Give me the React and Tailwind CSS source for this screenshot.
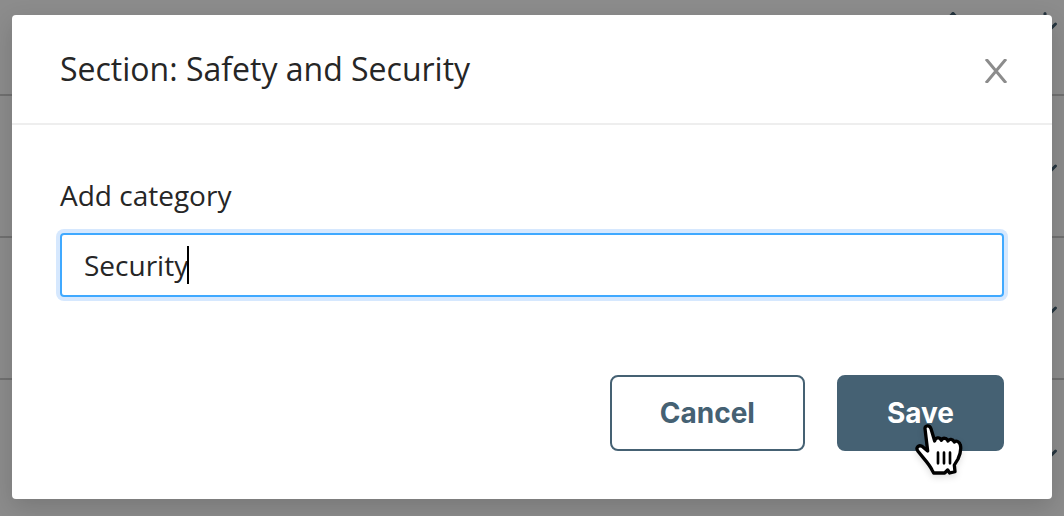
import React from 'react';
import { ArrowDown, ArrowUp } from 'lucide-react';

const rows = [1, 2, 3, 4];

const HandCursor = () => (
  <svg className="absolute left-[76px] top-[47px] w-[50px] h-[56px] pointer-events-none drop-shadow-md" viewBox="0 0 150 168">
    <path
      d="M36 20C35 10 50 8 54 20L65 57C67 46 80 44 85 55C89 46 102 47 105 57C109 49 119 51 124 60C130 54 140 60 142 69C146 84 140 100 135 111L124 129L126 149L110 153L104 144L95 153H62L57 144C49 126 33 111 15 88C7 77 16 68 27 73L44 87Z"
      fill="white"
      stroke="black"
      strokeWidth="10"
      strokeLinejoin="round"
    />
    <path d="M75 92V124M93 92V124M111 92V124" stroke="black" strokeWidth="8" strokeLinecap="round" />
  </svg>
);

const App = () => {
  return (
    <div className="relative min-h-screen overflow-hidden bg-white font-['Open_Sans','Noto_Sans',sans-serif] text-[#262626]">
      {/* Category list under the dialog */}
      <ul aria-hidden="true" className="-mt-[46px]">
        {rows.map((row) => (
          <li key={row} className="flex h-[142px] items-center justify-end gap-14 border-b-2 border-[#cccccc] pr-px text-[#456173] last:border-b-0">
            <ArrowUp size={36} />
            <ArrowDown size={36} />
          </li>
        ))}
      </ul>

      {/* Overlay */}
      <div className="absolute inset-0 bg-black/45 px-3 pt-[15px]">
        <div
          role="dialog"
          aria-labelledby="dialog-title"
          className="rounded bg-white shadow-[0_8px_24px_rgba(0,0,0,0.15)]"
        >
          <div className="flex items-center justify-between border-b-2 border-[#eeeeee] px-12 py-8">
            <h2 id="dialog-title" className="text-[32px] leading-11">Section: Safety and Security</h2>
            <button type="button" aria-label="Close" className="-mr-2 px-1 pt-2 pb-1">
              <svg className="w-6 h-6" viewBox="0 0 24 24" fill="none" stroke="#8c8c8c" strokeWidth="3">
                <path d="M2 0L22 24M22 0L2 24" />
              </svg>
            </button>
          </div>

          <form className="px-12 pt-12 pb-12" onSubmit={(e) => e.preventDefault()}>
            <label htmlFor="category" className="block text-[28px] leading-11">Add category</label>
            <div className="relative mt-4">
              <input
                id="category"
                type="text"
                defaultValue="Security"
                className="block h-16 w-full rounded border-2 border-[#40a9ff] px-[22px] text-[28px] caret-transparent outline-none ring-4 ring-[#d6e8fe]"
              />
              <span className="absolute left-[127px] top-[13px] h-[38px] w-0.5 bg-black" />
            </div>

            {/* Actions */}
            <div className="mt-[78px] flex justify-end gap-8 font-['Inter',sans-serif] text-[28px] leading-9 font-bold">
              <button type="button" className="rounded-lg border-2 border-[#456173] px-12 py-[18px] text-[#456173]">
                Cancel
              </button>
              <div className="relative">
                <button type="submit" className="rounded-lg border-2 border-[#456173] bg-[#456173] px-12 py-[18px] text-white">
                  Save
                </button>
                <HandCursor />
              </div>
            </div>
          </form>
        </div>
      </div>
    </div>
  );
};

export default App;
